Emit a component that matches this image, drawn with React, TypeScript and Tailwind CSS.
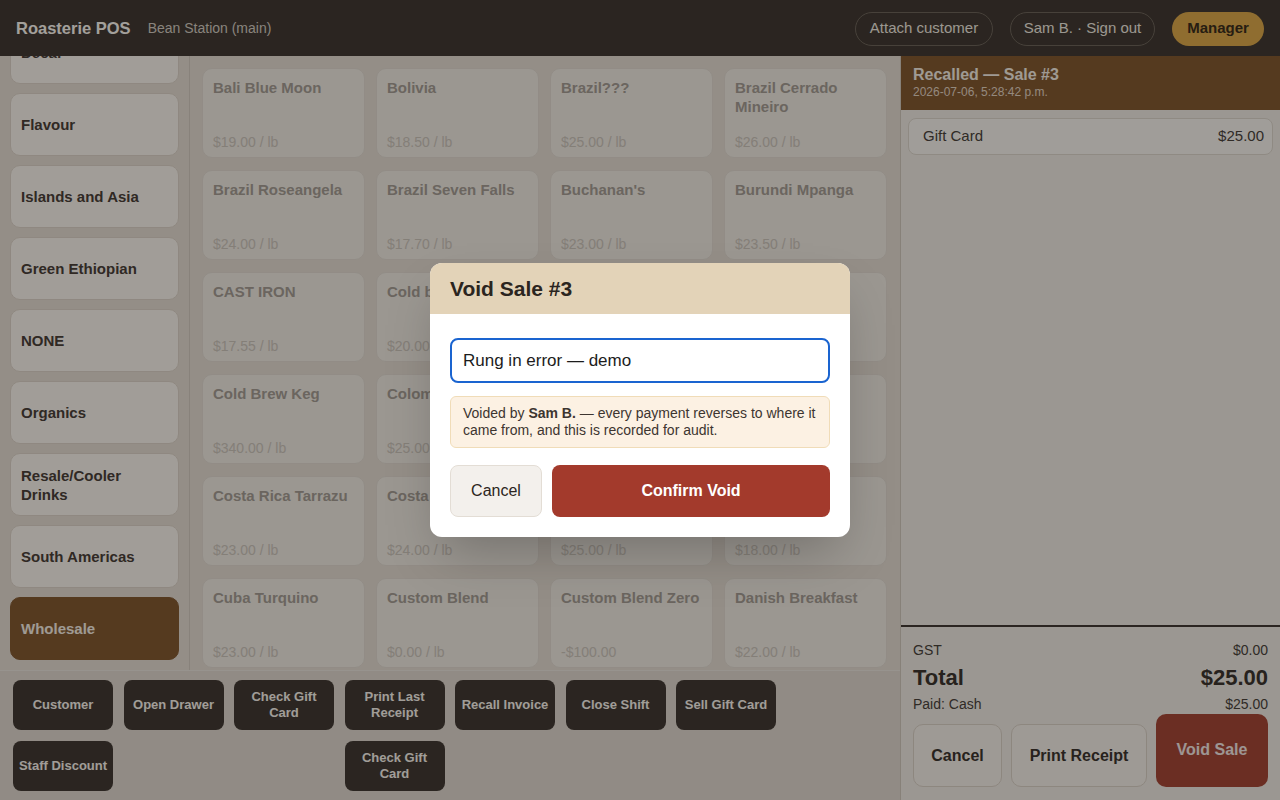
import React from "react";

const categories = [
  "Decaf",
  "Flavour",
  "Islands and Asia",
  "Green Ethiopian",
  "NONE",
  "Organics",
  "Resale/Cooler Drinks",
  "South Americas",
  "Wholesale",
];

const products: [string, string][] = [
  ["Bali Blue Moon", "$19.00 / lb"],
  ["Bolivia", "$18.50 / lb"],
  ["Brazil???", "$25.00 / lb"],
  ["Brazil Cerrado Mineiro", "$26.00 / lb"],
  ["Brazil Roseangela", "$24.00 / lb"],
  ["Brazil Seven Falls", "$17.70 / lb"],
  ["Buchanan's", "$23.00 / lb"],
  ["Burundi Mpanga", "$23.50 / lb"],
  ["CAST IRON", "$17.55 / lb"],
  ["Cold brew 1L", "$20.00 / lb"],
  ["Colombia", "$21.00 / lb"],
  ["Congo", "$19.50 / lb"],
  ["Cold Brew Keg", "$340.00 / lb"],
  ["Colombia Women's", "$25.00 / lb"],
  ["Costa Rica", "$22.00 / lb"],
  ["Crema", "$23.00 / lb"],
  ["Costa Rica Tarrazu", "$23.00 / lb"],
  ["Costa Rica HONEY", "$24.00 / lb"],
  ["Costa Rica La Minita", "$25.00 / lb"],
  ["Cuba", "$18.00 / lb"],
  ["Cuba Turquino", "$23.00 / lb"],
  ["Custom Blend", "$0.00 / lb"],
  ["Custom Blend Zero", "-$100.00"],
  ["Danish Breakfast", "$22.00 / lb"],
];

const actions: { label: string; cls?: string }[] = [
  { label: "Customer" },
  { label: "Open Drawer" },
  { label: "Check Gift Card" },
  { label: "Print Last Receipt" },
  { label: "Recall Invoice" },
  { label: "Close Shift" },
  { label: "Sell Gift Card" },
  { label: "Staff Discount", cls: "col-start-1" },
  { label: "Check Gift Card", cls: "col-start-4" },
];

export default function App() {
  return (
    <div className="relative w-[1280px] h-[800px] overflow-hidden bg-[#e4dbd0] font-['Liberation_Sans',Arial,sans-serif] text-[#3d352e]">
      {/* Header */}
      <header className="h-14 bg-[#423a33] flex items-center px-4">
        <div className="text-[16.5px] font-bold text-[#fbf6ef]">Roasterie POS</div>
        <div className="ml-[17px] text-[14px] text-[#d3cac0]">Bean Station (main)</div>
        <div className="ml-auto flex items-center gap-[17px] pt-[1px]">
          <button className="h-[34px] w-[138px] rounded-full border border-[#6e645a] text-[15px] text-[#efe8df]">
            Attach customer
          </button>
          <button className="h-[34px] w-[145px] rounded-full border border-[#6e645a] text-[15px] text-[#efe8df]">
            Sam B. · Sign out
          </button>
          <button className="h-[34px] w-[92px] rounded-full bg-[#dca84a] text-[15px] font-bold text-[#3b2e1c]">
            Manager
          </button>
        </div>
      </header>

      <div className="flex h-[744px]">
        {/* Left main */}
        <div className="w-[900px] flex flex-col">
          <div className="flex h-[614px]">
            {/* Sidebar */}
            <div className="w-[190px] border-r border-[#d2c8bd] overflow-hidden">
              <div className="-mt-[35px] px-[10px] flex flex-col gap-[9px]">
                {categories.map((c) => {
                  const active = c === "Wholesale";
                  return (
                    <div
                      key={c}
                      className={
                        active
                          ? "h-[63px] rounded-[10px] bg-[#835931] border border-[#835931] flex items-center px-[10px] text-[15px] font-bold leading-[19px] text-[#f5ede2]"
                          : "h-[63px] rounded-[10px] bg-[#f8f2ea] border border-[#dcd2c6] flex items-center px-[10px] text-[15px] font-bold leading-[19px] text-[#4a4038]"
                      }
                    >
                      {c}
                    </div>
                  );
                })}
              </div>
            </div>
            {/* Product grid */}
            <div className="flex-1 overflow-hidden pt-3 pl-3">
              <div className="grid grid-cols-[repeat(4,163px)] auto-rows-[90px] gap-x-[11px] gap-y-[12px]">
                {products.map(([n, p], i) => (
                  <div
                    key={i}
                    className="rounded-[10px] bg-[#eee8df] border border-[#e0d8ce] px-[10px] pt-[9px] pb-[6px] flex flex-col justify-between"
                  >
                    <div className="text-[15px] font-bold leading-[19px] text-[#a59c93]">{n}</div>
                    <div className="text-[14px] leading-[18px] text-[#cbc3b9]">{p}</div>
                  </div>
                ))}
              </div>
            </div>
          </div>
          {/* Action bar */}
          <div className="flex-1 bg-[#dfd6cd] border-t border-[#e9e2da] pt-[9px] pl-[13px]">
            <div className="grid grid-cols-[repeat(7,100px)] auto-rows-[50px] gap-x-[10.5px] gap-y-[11px]">
              {actions.map((a, i) => (
                <div
                  key={i}
                  className={`${a.cls ?? ""} rounded-lg bg-[#423a33] flex items-center justify-center text-center text-[13px] font-bold leading-[16px] text-[#f7f1ea] px-1`}
                >
                  {a.label}
                </div>
              ))}
            </div>
          </div>
        </div>

        {/* Right panel */}
        <div className="w-[380px] border-l border-[#cfc6bb] bg-[#eee9e1] flex flex-col">
          <div className="h-[54px] bg-[#835931] px-[12px] pt-[9px]">
            <div className="text-[16px] font-bold leading-[19px] text-[#f5ede2]">Recalled — Sale #3</div>
            <div className="mt-[1px] text-[12px] leading-[15px] text-[#e2d3c1]">2026-07-06, 5:28:42 p.m.</div>
          </div>
          <div className="flex-1 px-[7px] pt-[8px]">
            <div className="h-[37px] rounded-lg bg-[#f6f2eb] border border-[#dcd4ca] flex items-center justify-between pl-[14px] pr-[8px] text-[15px] text-[#4a423b]">
              <span>Gift Card</span>
              <span>$25.00</span>
            </div>
          </div>
          <div className="border-t-2 border-[#423a33] px-[12px] pt-[14px] pb-[13px]">
            <div className="flex justify-between text-[14px] leading-[18px] text-[#4a423b]">
              <span>GST</span>
              <span>$0.00</span>
            </div>
            <div className="flex justify-between text-[22px] font-bold leading-[28px] mt-[5px] text-[#3d352e]">
              <span>Total</span>
              <span>$25.00</span>
            </div>
            <div className="flex justify-between text-[14px] leading-[18px] mt-[3px] text-[#4a423b]">
              <span>Paid: Cash</span>
              <span>$25.00</span>
            </div>
            <div className="flex items-end gap-[9px] mt-[1px]">
              <div className="w-[89px] h-[63px] rounded-[10px] bg-[#f3ede5] border border-[#d9cfc4] flex items-center justify-center text-[16px] font-bold text-[#3d352e]">
                Cancel
              </div>
              <div className="w-[136px] h-[63px] rounded-[10px] bg-[#f3ede5] border border-[#d9cfc4] flex items-center justify-center text-[16px] font-bold text-[#3d352e]">
                Print Receipt
              </div>
              <div className="w-[112px] h-[73px] rounded-[10px] bg-[#a54837] flex items-center justify-center pb-[1px] text-[16px] font-bold text-[#f2e6e2]">
                Void Sale
              </div>
            </div>
          </div>
        </div>
      </div>

      {/* Overlay */}
      <div className="absolute inset-0 bg-black/35 flex items-center justify-center">
        <div className="w-[420px] rounded-xl bg-white overflow-hidden shadow-2xl">
          <div className="h-[51px] bg-[#e3d3b8] flex items-center px-5">
            <div className="text-[21px] font-bold text-[#2b2520]">Void Sale #3</div>
          </div>
          <div className="px-5 pt-[24px] pb-5">
            <div className="h-[45px] rounded-lg border-2 border-[#1a64d0] flex items-center px-[11px] text-[17px] text-[#1c1c1c]">
              Rung in error — demo
            </div>
            <div className="mt-[13px] rounded-md bg-[#fcf1e3] border border-[#f0dcb8] px-3 py-[8px] text-[14px] leading-[17px] text-[#3d3530]">
              Voided by <b>Sam B.</b> — every payment reverses to where it came from, and this is recorded for audit.
            </div>
            <div className="mt-[17px] flex gap-[10px]">
              <div className="w-[92px] h-[52px] rounded-lg bg-[#f3f0ec] border border-[#e3ddd5] flex items-center justify-center text-[16px] text-[#2b2520]">
                Cancel
              </div>
              <div className="flex-1 h-[52px] rounded-lg bg-[#a33a2c] flex items-center justify-center text-[16px] font-bold text-white">
                Confirm Void
              </div>
            </div>
          </div>
        </div>
      </div>
    </div>
  );
}
